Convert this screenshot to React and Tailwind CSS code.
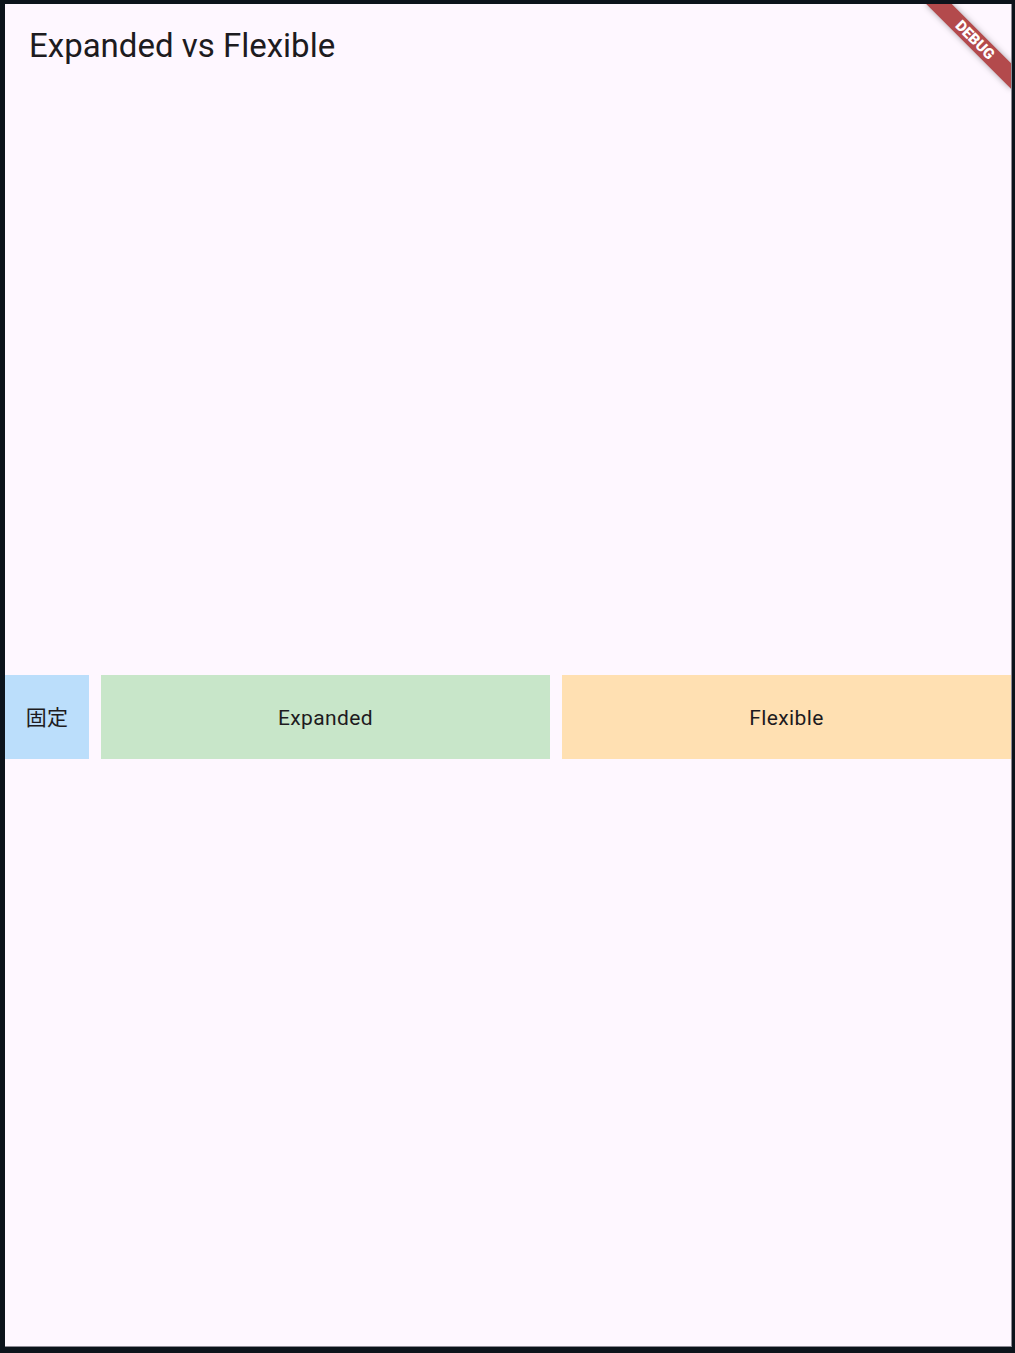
import React from "react";

const FONT = "font-['Roboto','Noto_Sans_CJK_JP',sans-serif]";

const Box = ({ color, className = "", children }) => (
  <div
    className={`${color} ${className} h-full pt-[4px] flex items-center justify-center text-[21px] tracking-[0.375px] text-[#1d1b20]`}
  >
    {children}
  </div>
);

const DebugBanner = () => (
  <div className="absolute top-0 right-0 w-[120px] h-[120px] overflow-hidden pointer-events-none">
    <div className="absolute top-[27px] right-[-24px] w-[120px] h-[18px] rotate-45 bg-[#b34a4c] shadow-[0_0_6px_rgba(0,0,0,0.35)] flex items-center justify-center">
      <span className="text-white text-[15px] font-black leading-none">DEBUG</span>
    </div>
  </div>
);

export default function App() {
  return (
    <div className={`${FONT} w-[1015px] h-[1353px] bg-[#0c131b] pt-[4px] pl-[5px]`}>
      <div className="relative w-[1007px] h-[1343px] bg-[#fef7ff] border-r border-b border-[#8d8a94] flex flex-col overflow-hidden">
        <header className="h-[84px] shrink-0 flex items-center px-[24px]">
          <h1 className="text-[33px] font-normal text-[#1d1b20]">Expanded vs Flexible</h1>
        </header>

        <main className="flex-1 flex items-center">
          <div className="w-full h-[84px] flex gap-[12px]">
            <Box color="bg-[#bbdefb]" className="w-[84px] shrink-0">固定</Box>
            <Box color="bg-[#c8e6c9]" className="flex-1">Expanded</Box>
            <Box color="bg-[#ffe0b2]" className="flex-1">Flexible</Box>
          </div>
        </main>

        <DebugBanner />
      </div>
    </div>
  );
}
